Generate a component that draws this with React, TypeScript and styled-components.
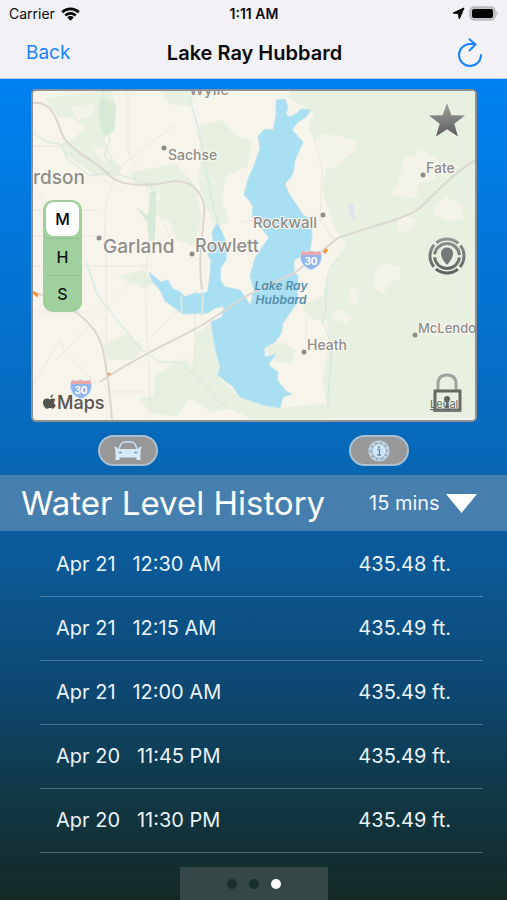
import React from "react";
import styled, { createGlobalStyle } from "styled-components";

const GlobalStyle = createGlobalStyle`
  * { box-sizing: border-box; }
  body {
    margin: 0;
    font-family: Inter, "Liberation Sans", sans-serif;
    color: #fff;
  }
  button, select, input { font: inherit; color: inherit; }
`;

const Page = styled.main`
  min-height: 100vh;
  display: flex;
  flex-direction: column;
  background: linear-gradient(
    180deg,
    #0083f8 0%,
    #0080f0 10%,
    #0768b8 50%,
    #0b5690 65%,
    #0d4770 77%,
    #103846 88%,
    #132f33 95%,
    #142924 100%
  );
`;

const Header = styled.header`
  background: #f2f1f6;
  color: #0b0b0d;
  border-bottom: 1px solid #b5cbe4;
`;

const StatusBar = styled.div`
  display: grid;
  grid-template-columns: 1fr auto 1fr;
  align-items: center;
  height: 27px;
  padding: 0 8px 0 9px;
  font-size: 14px;
  line-height: 20px;
`;

const StatusGroup = styled.div<{ $end?: boolean }>`
  display: flex;
  align-items: center;
  gap: ${(p) => (p.$end ? 4 : 6)}px;
  justify-content: ${(p) => (p.$end ? "flex-end" : "flex-start")};
  svg { display: block; }
`;

const Clock = styled.time`
  font-weight: 600;
`;

const NavBar = styled.nav`
  display: grid;
  grid-template-columns: 1fr auto 1fr;
  align-items: center;
  height: 51px;
  padding: 0 24px 0 26px;
`;

const Title = styled.h1`
  margin: 0;
  font-size: 20px;
  line-height: 24px;
  font-weight: 600;
`;

const BackLink = styled.a`
  color: #1a84ff;
  font-size: 19px;
  line-height: 24px;
  text-decoration: none;
`;

const PlainButton = styled.button`
  display: block;
  padding: 0;
  border: 0;
  background: none;
  cursor: pointer;
  svg { display: block; }
`;

const RefreshButton = styled(PlainButton)`
  justify-self: end;
`;

const MapCard = styled.section`
  position: relative;
  margin: 10px 30px 0 31px;
  border: 2px solid #8d9096;
  border-radius: 5px;
  overflow: hidden;
  background: #f7f4ec;
`;

const MapDrawing = styled.svg`
  display: block;
  width: 100%;
  height: auto;
  font-family: Inter, "Liberation Sans", sans-serif;
`;

const Segments = styled.fieldset`
  position: absolute;
  left: 10px;
  top: 109px;
  width: 39px;
  margin: 0;
  padding: 0 3px;
  border: 0;
  border-radius: 10px;
  background: #9fd09e;
`;

const Segment = styled.label`
  display: grid;
  align-items: center;
  position: relative;
  height: 38px;
  color: #10180f;
  font-size: 16px;
  font-weight: 500;
  line-height: 34px;
  text-align: center;
  cursor: pointer;
  & + & { height: 37px; border-top: 1px solid #90c090; }
  input {
    position: absolute;
    inset: 0;
    margin: 0;
    opacity: 0;
  }
  span { display: block; border-radius: 8px; }
  input:checked + span {
    background: #fff;
    color: #000;
  }
`;

const MapTools = styled.div`
  position: absolute;
  top: 11px;
  bottom: 7px;
  right: 9px;
  display: flex;
  flex-direction: column;
  justify-content: space-between;
`;

const Actions = styled.div`
  display: grid;
  grid-template-columns: 1fr 1fr;
  justify-items: center;
  padding: 13px 3px 9px;
`;

const Pill = styled.button`
  display: grid;
  place-items: center;
  width: 60px;
  height: 31px;
  padding: 0;
  border: 2px solid #a9bfd2;
  border-radius: 16px;
  background: #989898;
  cursor: pointer;
`;

const SectionBar = styled.div`
  display: flex;
  align-items: center;
  justify-content: space-between;
  height: 56px;
  padding: 0 30px 0 21px;
  background: #467fae;
`;

const SectionTitle = styled.h2`
  margin: 0;
  font-size: 33px;
  line-height: 42px;
  font-weight: 400;
`;

const Interval = styled.label`
  position: relative;
  display: flex;
  align-items: center;
  gap: 6px;
`;

const IntervalSelect = styled.select`
  appearance: none;
  padding: 0;
  border: 0;
  background: none;
  font-size: 20px;
  line-height: 24px;
  color: #f0f6fb;
  option { color: #111; }
`;

const History = styled.table`
  margin: 1px 24px 0 40px;
  border-collapse: collapse;
`;

const Reading = styled.tr`
  height: 64px;
  border-bottom: 1px solid rgba(190, 215, 230, 0.32);
`;

const Cell = styled.td<{ $end?: boolean }>`
  padding: ${(p) => (p.$end ? "0 32px 0 0" : "0 0 0 16px")};
  text-align: ${(p) => (p.$end ? "right" : "left")};
  font-size: 20px;
  line-height: 24px;
  color: #eaf3fa;
  white-space: pre;
`;

const Pager = styled.nav`
  align-self: center;
  display: flex;
  align-items: center;
  justify-content: center;
  gap: 12px;
  width: 148px;
  height: 33px;
  margin-top: auto;
  background: #354747;
`;

const Dot = styled.button<{ $on?: boolean }>`
  width: 10px;
  height: 10px;
  padding: 0;
  border: 0;
  border-radius: 50%;
  background: ${(p) => (p.$on ? "#fff" : "#17302e")};
`;

const greens = [
  "M46 98 L100 91 112 91 116 108 115 130 104 140 112 158 122 168 118 176 96 176 82 166 66 156 60 144 74 138 86 128 72 118 58 116 50 108 Z",
  "M160 91 L196 91 190 106 170 104 Z",
  "M198 126 L222 120 236 136 252 140 248 166 226 176 222 200 230 222 216 226 206 208 198 180 202 150 Z",
  "M130 172 L176 164 196 186 202 220 194 246 176 240 170 222 150 212 162 196 134 182 Z",
  "M290 91 L476 91 476 418 330 418 322 380 330 340 322 296 334 262 346 246 334 226 322 190 328 160 346 158 356 142 336 134 318 142 308 130 314 112 288 98 Z",
  "M102 346 L126 334 144 346 134 360 108 360 Z",
  "M154 376 L184 358 200 372 220 392 232 408 210 412 190 398 178 416 152 414 138 398 154 396 Z",
  "M196 334 L212 322 220 352 218 376 238 396 278 408 326 404 330 419 250 419 212 398 192 362 Z",
  "M264 348 L282 342 296 350 292 362 276 362 Z",
  "M118 276 L142 270 160 282 142 288 Z",
  "M302 306 L322 296 326 322 310 318 Z",
];

const parks = ["M136 207 L148 216 150 192 156 192 154 240 149 242 147 222 Z", "M100 98 L116 104 114 130 104 136 98 118 Z"];

const clearings = [
  "M316 140 L322 134 344 136 346 142 358 144 354 154 342 156 340 164 330 170 320 160 Z",
  "M404 158 L416 156 420 148 438 160 436 178 418 184 416 198 390 196 398 184 Z",
  "M434 206 L446 196 462 206 464 218 450 222 434 214 Z",
  "M376 268 L384 264 400 266 400 280 390 282 384 294 374 288 Z",
  "M350 288 L360 290 356 304 348 302 Z",
  "M334 310 L342 310 352 318 346 324 332 318 Z",
  "M70 106 L96 104 92 116 78 120 Z",
  "M92 144 L110 152 110 164 98 158 Z",
  "M398 216 L416 218 412 230 398 232 Z",
];

const roads = [
  "M33 103 C52 101 56 118 62 134 C70 152 96 160 110 176 C124 188 150 186 174 181 C196 180 206 198 204 216 C202 240 198 262 202 290",
  "M100 382 C130 360 180 338 204 324 L246 296 296 272 L338 238 C370 226 404 220 420 208 C444 184 460 168 476 160",
  "M33 292 C70 302 96 324 102 346 C108 372 110 396 112 419",
];

const minorRoads = [
  "M33 146 H60 L108 182 M33 210 H100 M33 236 H110 M33 266 H150 M33 312 H90",
  "M106 250 V370 M128 91 V150 L176 250 M150 244 C140 282 150 340 150 419 M195 376 V290",
  "M176 124 L120 166 106 200 104 250 M56 360 L150 262 M33 384 L60 340 64 350 96 384",
  "M312 130 L322 170 320 220 334 240 M150 338 L200 290 M112 392 H150 M420 182 L424 202",
  "M240 222 L300 214 M306 300 V344 M33 186 L60 218",
];

const creeks = [
  "M33 134 L48 142 60 144 68 160 90 176 110 172 150 184 156 200 154 240",
  "M104 91 L102 112 110 140 104 156 120 172",
  "M190 100 L196 120 204 160 214 210 220 226",
  "M86 262 L98 296 120 324 142 350 160 362 180 362 204 384 218 400 230 410",
  "M340 258 C318 270 332 304 322 322 C340 350 326 376 328 410",
];

const lake =
  "M276 100 L285 99 288 107 286 114 290 117 297 113 301 109 311 110 306 117 298 122 292 130 303 142 299 151 295 160 293 174 285 184 289 194 296 204 303 215 311 219 312 237 310 252 294 260 294 272 298 276 297 303 283 323 281 334 275 342 264 348 265 357 276 354 268 365 278 372 277 380 286 391 292 394 283 397 280 408 263 405 240 397 233 387 218 375 220 366 216 352 213 336 211 322 222 317 224 306 215 308 208 313 183 314 175 308 165 301 160 290 152 281 149 272 161 282 168 280 172 288 180 292 185 297 195 293 203 294 208 291 210 275 211 260 208 255 213 240 212 232 217 223 222 232 227 245 226 260 221 267 220 280 225 287 240 290 246 298 250 306 254 290 250 277 255 258 269 237 258 225 252 216 253 207 249 200 244 195 248 179 254 166 260 148 258 136 265 129 273 130 276 116 Z";

type Place = { name: string; x: number; y: number; size: number; dot?: [number, number] };

const places: Place[] = [
  { name: "Wylie", x: 189, y: 95, size: 15 },
  { name: "Sachse", x: 168, y: 160, size: 14, dot: [164, 148] },
  { name: "rdson", x: 33, y: 184, size: 19 },
  { name: "Garland", x: 103, y: 253, size: 19, dot: [99, 238] },
  { name: "Rowlett", x: 195, y: 252, size: 18, dot: [192, 254] },
  { name: "Rockwall", x: 253, y: 228, size: 15, dot: [323, 215] },
  { name: "Fate", x: 426, y: 173, size: 14, dot: [423, 175] },
  { name: "Heath", x: 307, y: 350, size: 14, dot: [304, 352] },
  { name: "McLendo", x: 418, y: 333, size: 13, dot: [415, 335] },
];

function Shield({ x, y }: { x: number; y: number }) {
  return (
    <g transform={`translate(${x} ${y})`}>
      <path d="M1 1 Q5 3 10 1 Q15 3 19 1 Q22 6 20 11 Q18 17 10 20 Q2 17 0 11 Q-2 6 1 1Z" fill="#91b5ed" stroke="#dce6f6" />
      <path d="M1 1 Q5 3 10 1 Q15 3 19 1 L20 5 H0Z" fill="#eba6aa" />
      <text x="10" y="15" textAnchor="middle" fontSize="10" fontWeight="700" fill="#fff">30</text>
    </g>
  );
}

function MapView() {
  return (
    <MapDrawing viewBox="33 91 442 329" role="img" aria-label="Map of Lake Ray Hubbard">
      {greens.map((d) => <path key={d} d={d} fill="#e8f0e1" />)}
      {parks.map((d) => <path key={d} d={d} fill="#d9ead6" />)}
      {clearings.map((d) => <path key={d} d={d} fill="#f4f3e9" />)}
      <path d="M348 203 l5 1 2 15 -4 -1 Z" fill="#dde2ea" />
      {creeks.map((d) => <path key={d} d={d} fill="none" stroke="#cfe6e2" strokeWidth="1" />)}
      {minorRoads.map((d) => <path key={d} d={d} fill="none" stroke="#ebe7df" strokeWidth="1" />)}
      <path d={lake} fill="#a9dff3" stroke="#bde3ec" strokeWidth="1" strokeLinejoin="round" />
      <path d="M181 295 L182 314 M203 292 L202 316" fill="none" stroke="#d5e6e2" strokeWidth="2" />
      {roads.map((d) => <path key={d} d={d} fill="none" stroke="#dcd8d1" strokeWidth="2" />)}
      <path d="M33 292 l5 4 M324 253 l3 -4" stroke="#f5973f" strokeWidth="3" />
      <circle cx="109" cy="374" r="1.5" fill="#ee9e63" />
      <Shield x={71} y={379} />
      <Shield x={301} y={250} />
      <g fontWeight="500" fill="#8f8d89" stroke="#faf8f2" strokeWidth="2" paintOrder="stroke">
        {places.map((p) => (
          <g key={p.name}>
            {p.dot && <circle cx={p.dot[0]} cy={p.dot[1]} r="2.5" stroke="none" />}
            <text x={p.x} y={p.y} fontSize={p.size}>{p.name}</text>
          </g>
        ))}
      </g>
      <g fontSize="12" fontWeight="600" fontStyle="italic" fill="#568fab" textAnchor="middle">
        <text x="281" y="290">Lake Ray</text>
        <text x="281" y="304">Hubbard</text>
      </g>
      <g fill="#55534f">
        <path d="M53.500 398 c-.3-1.800 1.100-3.200 2.500-3.400 .2 1.800-1.100 3.300-2.500 3.400Z M50 398.500 c1.500 0 2 .7 3 .7 s1.600-.7 3.200-.6 c1 .1 1.800 .5 2.300 1.300 -2.200 1.300-1.800 4.300 .4 5.200 -.6 1.700-1.800 3.700-3.100 3.700 -1.100 0-1.500-.7-2.700-.7 s-1.700 .7-2.800 .7 c-2.100 0-4.300-3.700-4.300-6.400 0-2.400 1.600-4 4-3.900Z" transform="translate(-3 0)" />
        <text x="57" y="409" fontSize="18" fontWeight="500">Maps</text>
      </g>
      <text x="430" y="408" fontSize="11" fill="#6c6c6a" textDecoration="underline">Legal</text>
    </MapDrawing>
  );
}

const WifiIcon = () => (
  <svg width="19" height="14" viewBox="0 0 19 14" aria-hidden="true">
    <g fill="none" stroke="#080808" strokeWidth="2.600">
      <path d="M1.200 5.200 A12 12 0 0 1 17.800 5.200" />
      <path d="M4.300 8.500 A7.500 7.500 0 0 1 14.700 8.500" />
    </g>
    <path d="M6.300 10.400 A4.600 4.600 0 0 1 12.700 10.400 L9.500 13.700Z" fill="#080808" />
  </svg>
);

const LocationIcon = () => (
  <svg width="13" height="13" viewBox="0 0 13 13" aria-hidden="true">
    <path d="M12 1 L7.300 12 6.400 6.800 1 6Z" fill="#080808" stroke="#080808" strokeLinejoin="round" />
  </svg>
);

const BatteryIcon = () => (
  <svg width="30" height="15" viewBox="0 0 30 15" aria-hidden="true">
    <rect x="1" y="1" width="25" height="13" rx="4" fill="#c6c6ca" stroke="#b9b9bd" strokeWidth="1.500" />
    <rect x="3" y="3" width="21" height="9" rx="2" fill="#050505" />
    <path d="M27.500 5 Q29.500 7.500 27.500 10Z" fill="#adadb1" />
  </svg>
);

const RefreshIcon = () => (
  <svg width="26" height="30" viewBox="0 0 26 30" fill="none" stroke="#1a84ff" strokeWidth="2" strokeLinecap="round" strokeLinejoin="round" aria-hidden="true">
    <path d="M24 17 A11 11 0 1 1 13 6 H18" />
    <path d="M12.500 1.200 L18.500 6.500 12.500 12.500" />
  </svg>
);

const StarIcon = () => (
  <svg width="38" height="37" viewBox="0 0 38 37" aria-hidden="true">
    <defs>
      <linearGradient id="metal" x1="0" y1="0" x2="0" y2="1">
        <stop offset="0" stopColor="#a2a2a0" />
        <stop offset="1" stopColor="#5c5c5c" />
      </linearGradient>
    </defs>
    <path d="M19 1 L23.400 13.200 37 13.600 26.300 21.800 30 34.600 19 27.200 8 34.600 11.700 21.800 1 13.600 14.600 13.200Z" fill="url(#metal)" />
  </svg>
);

const TargetIcon = () => (
  <svg width="38" height="38" viewBox="0 0 38 38" aria-hidden="true">
    <defs>
      <linearGradient id="ring" gradientUnits="userSpaceOnUse" x1="0" y1="0" x2="0" y2="38">
        <stop offset="0" stopColor="#949694" />
        <stop offset="1" stopColor="#5c5e5c" />
      </linearGradient>
    </defs>
    <g fill="none" stroke="url(#ring)" strokeWidth="3">
      <circle cx="19" cy="19" r="17" strokeDasharray="23.700 3" strokeDashoffset="-14.800" />
      <circle cx="19" cy="19" r="12.500" strokeDasharray="36.300 3" strokeDashoffset="-1.500" />
    </g>
    <path d="M19 10.500 C15.500 10.500 13 13 13 16.500 C13 21 16.500 25 19 28 C21.500 25 25 21 25 16.500 C25 13 22.500 10.500 19 10.500Z" fill="#767977" />
  </svg>
);

const LockIcon = () => (
  <svg width="38" height="40" viewBox="0 0 38 40" fill="none" aria-hidden="true">
    <path d="M10 18 V11 Q10 2 19 2 Q28 2 28 11 V18" stroke="#a1a3a0" strokeWidth="3" />
    <rect x="7" y="18" width="25" height="19" stroke="#676967" strokeWidth="3" />
    <path d="M5 38 H33" stroke="#777977" strokeWidth="2" />
    <circle cx="19" cy="26" r="3" fill="#626462" />
    <path d="M19 26 L21 35 H17Z" fill="#626462" />
  </svg>
);

const CarIcon = () => (
  <svg width="28" height="20" viewBox="0 0 28 20" aria-hidden="true">
    <path d="M5 8 Q7 1.500 10 1 H18 Q21 1.500 23 8" fill="none" stroke="#c9e4f8" strokeWidth="1.500" />
    <path d="M0 6 Q2 5 4 8 H24 Q26 5 28 6 L26.500 9 V19 H22.500 V16.500 H5.500 V19 H1.500 V9Z" fill="#d5ebfc" />
    <path d="M4.500 11.500 H8 M20 11.500 H23.500" stroke="#879dac" strokeWidth="1.500" />
  </svg>
);

const InfoIcon = () => (
  <svg width="22" height="22" viewBox="0 0 22 22" aria-hidden="true">
    <circle cx="11" cy="11" r="10" fill="none" stroke="#b9d9f0" strokeWidth="1.200" />
    <circle cx="11" cy="11" r="8.500" fill="none" stroke="#c8e3f6" strokeWidth="1.500" strokeDasharray="4 1.340" />
    <circle cx="11" cy="11" r="7" fill="#cde7fa" />
    <path d="M9.500 9.500 H11.500 V15 M9.200 15 H13" fill="none" stroke="#71899b" strokeWidth="1.300" />
    <circle cx="11" cy="7" r="1" fill="#71899b" />
  </svg>
);

const readings = [
  { when: "Apr 21   12:30 AM", level: "435.48 ft." },
  { when: "Apr 21   12:15 AM", level: "435.49 ft." },
  { when: "Apr 21   12:00 AM", level: "435.49 ft." },
  { when: "Apr 20   11:45 PM", level: "435.49 ft." },
  { when: "Apr 20   11:30 PM", level: "435.49 ft." },
];

export default function App() {
  return (
    <>
      <GlobalStyle />
      <Page>
        <Header>
          <StatusBar>
            <StatusGroup>Carrier <WifiIcon /></StatusGroup>
            <Clock>1:11 AM</Clock>
            <StatusGroup $end><LocationIcon /><BatteryIcon /></StatusGroup>
          </StatusBar>
          <NavBar>
            <BackLink href="#">Back</BackLink>
            <Title>Lake Ray Hubbard</Title>
            <RefreshButton aria-label="Refresh"><RefreshIcon /></RefreshButton>
          </NavBar>
        </Header>

        <MapCard>
          <MapView />
          <Segments aria-label="Map type">
            {["M", "H", "S"].map((s, i) => (
              <Segment key={s}>
                <input type="radio" name="map-type" value={s} defaultChecked={i === 0} />
                <span>{s}</span>
              </Segment>
            ))}
          </Segments>
          <MapTools>
            <PlainButton aria-label="Favorite"><StarIcon /></PlainButton>
            <PlainButton aria-label="Center on lake"><TargetIcon /></PlainButton>
            <PlainButton aria-label="Lock map"><LockIcon /></PlainButton>
          </MapTools>
        </MapCard>

        <Actions>
          <Pill aria-label="Directions"><CarIcon /></Pill>
          <Pill aria-label="Lake information"><InfoIcon /></Pill>
        </Actions>

        <SectionBar>
          <SectionTitle>Water Level History</SectionTitle>
          <Interval>
            <IntervalSelect aria-label="Interval" defaultValue="15">
              <option value="15">15 mins</option>
            </IntervalSelect>
            <svg width="31" height="19" viewBox="0 0 31 19" aria-hidden="true">
              <path d="M0 0 H31 L15.500 19Z" fill="#fff" />
            </svg>
          </Interval>
        </SectionBar>

        <History>
          <tbody>
            {readings.map((r) => (
              <Reading key={r.when}>
                <Cell>{r.when}</Cell>
                <Cell $end>{r.level}</Cell>
              </Reading>
            ))}
          </tbody>
        </History>

        <Pager aria-label="Pages">
          <Dot aria-label="Page 1" />
          <Dot aria-label="Page 2" />
          <Dot aria-label="Page 3" $on aria-current="page" />
        </Pager>
      </Page>
    </>
  );
}
